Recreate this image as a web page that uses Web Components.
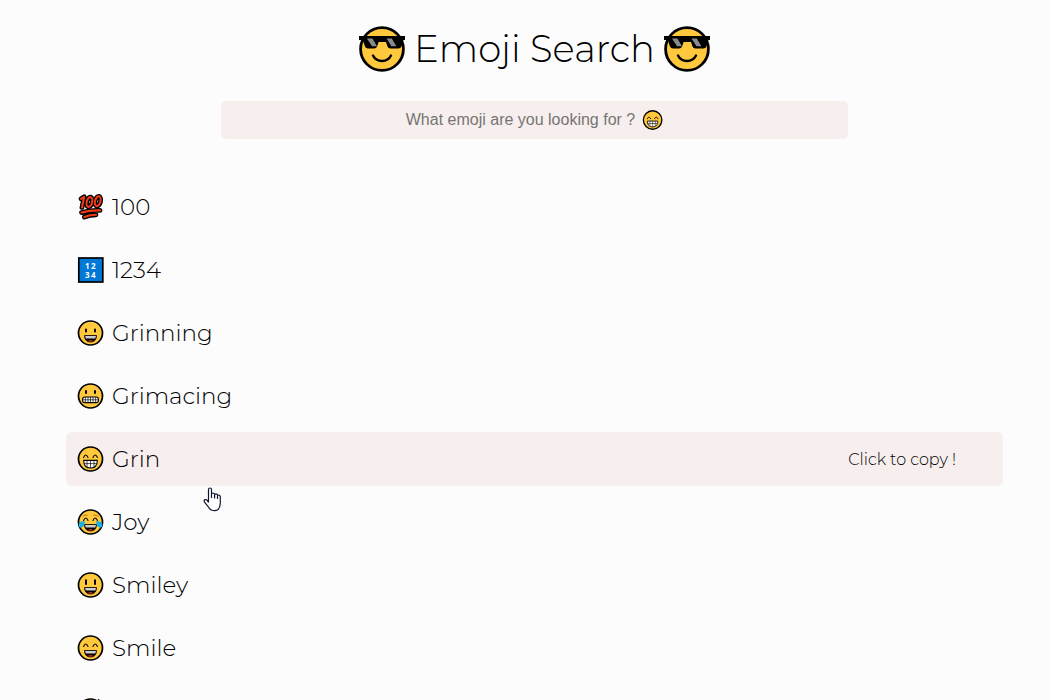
<!DOCTYPE html>
<html lang="en">
<head>
<meta charset="utf-8">
<meta name="viewport" content="width=device-width, initial-scale=1">
<title>Emoji Search</title>
<style>
  html { scrollbar-width: none; }
  body {
    margin: 0;
    background: #fcfcfc;
    color: #000;
    font-family: Montserrat, Inter, sans-serif;
    font-weight: 300;
  }
</style>
</head>
<body>
<emoji-app></emoji-app>
<script>
const face = '<circle cx="12.5" cy="13" r="12" fill="#ffc83d" stroke="#000" stroke-width="1.7"/>';
const eyes = (y, h) => `<rect x="7" y="${y}" width="2" height="${h}" rx="1"/><rect x="16" y="${y}" width="2" height="${h}" rx="1"/>`;
const arcs = '<path d="M5.6 11.4Q7.8 6.6 10 11.4M15 11.4Q17.2 6.6 19.4 11.4" fill="none" stroke="#000" stroke-width="1.1" stroke-linecap="round"/>';
const laugh = '<path d="M6.5 15.6H18.5Q18.4 22 12.5 22T6.5 15.6Z" stroke="#000" stroke-width=".8"/><path d="M7 15.9H18L17.3 18.6H7.9Z" fill="#ccc"/><path d="M10 21Q12.5 18.8 15 21Q12.5 22.2 10 21Z" fill="#e8290b"/>';
const hundredMark = '<path d="M3 4.8L6.2 2.8L4 13.4"/><ellipse cx="11.4" cy="8" rx="2.7" ry="5" transform="rotate(14 11.4 8)"/><ellipse cx="19.8" cy="7.2" rx="2.7" ry="5" transform="rotate(14 19.8 7.2)"/><path d="M3.6 18.6Q13 16 22 16.4M6.4 23Q12 20.8 18 20.8"/>';

const ART = {
  cool: [46, `<circle cx="23" cy="23" r="21.4" fill="#ffc83d" stroke="#000" stroke-width="2.8"/>
    <path d="M0 10H46V14H44.4L42.6 20Q42 22.4 39.6 22.4H31.6Q29 22.4 28.4 20.2L27 16H19.6L18.2 20.2Q17.4 22.4 15 22.4H8.8Q6.4 22.4 5.8 20L3.8 14H0Z"/>
    <path d="M8 12.6H13.4L18 20.2H13ZM27.6 12.6H32.8L37.4 20.2H32.4Z" fill="#8a8a8a"/>
    <path d="M14 29.6Q16.6 35 23 35T32 29.6" fill="none" stroke="#000" stroke-width="2.4" stroke-linecap="round"/>`],
  hundred: [26, `<g fill="none" stroke-linecap="round" stroke-linejoin="round">
      <g stroke="#000" stroke-width="4.8">${hundredMark}</g>
      <g stroke="#f03a17" stroke-width="2.1">${hundredMark}</g></g>`],
  numbers: [26, `<rect x=".8" y="1" width="24" height="24" fill="#0078d7" stroke="#000" stroke-width="1.7"/>
    <g fill="#fff" font-family="Open Sans, sans-serif" font-weight="700" font-size="8"><text x="7" y="12">1</text><text x="13" y="12">2</text><text x="7" y="21">3</text><text x="13" y="21">4</text></g>`],
  grinning: [26, face + eyes(8.6, 4) + laugh],
  grimacing: [26, face + eyes(7, 4) + `<rect x="4.6" y="14" width="15.8" height="5.6" rx="2.2" fill="#fff" stroke="#000" stroke-width="1.1"/>
    <path d="M5 16.8H20M7.4 14V19.6M10 14V19.6M12.5 14V19.6M15 14V19.6M17.6 14V19.6" stroke="#222" stroke-width=".8"/>`],
  grin: [26, face + arcs + `<path d="M5.7 14.4H19.3Q19.2 22 12.5 22T5.7 14.4Z" fill="#fff" stroke="#000" stroke-width="1.1"/>
    <path d="M6.2 17.6H18.8M9 14.4V21M12.5 14.4V22M16 14.4V21" stroke="#222" stroke-width=".8"/>`],
  joy: [26, face + `<path d="M4.6 7.6Q7 5 9.8 6.4M15.2 6.4Q18 5 20.4 7.6" fill="none" stroke="#d08a16" stroke-width="1.1"/>` + arcs + laugh +
    `<path d="M7 12.4Q1.8 11.6 .6 15.4Q.2 18.6 3.4 18.6Q6.2 18 7 12.4ZM18 12.4Q23.2 11.6 24.4 15.4Q24.8 18.6 21.6 18.6Q18.8 18 18 12.4Z" fill="#17b0e8"/>`],
  smiley: [26, face + eyes(7.2, 5.8) + laugh],
  smile: [26, face + arcs + laugh],
  sweat: [26, face + arcs + laugh + '<path d="M20.6 1Q17.6 5.4 18.4 7.4Q20.8 9.6 22.8 7.4Q23.4 5 20.6 1Z" fill="#17b0e8" stroke="#000" stroke-width=".8"/>']
};

customElements.define('emoji-glyph', class extends HTMLElement {
  connectedCallback() {
    const [box, art] = ART[this.getAttribute('name')];
    this.attachShadow({ mode: 'open' }).innerHTML = `
      <style>
        :host { display: block; flex: none; width: var(--size, 26px); height: var(--size, 26px); }
        svg { display: block; width: 100%; height: 100%; overflow: visible; }
      </style>
      <svg viewBox="0 0 ${box} ${box}" aria-hidden="true">${art}</svg>`;
  }
});

customElements.define('app-title', class extends HTMLElement {
  connectedCallback() {
    this.attachShadow({ mode: 'open' }).innerHTML = `
      <style>
        :host { display: block; }
        h1 {
          display: flex; justify-content: center; align-items: center; gap: 9px;
          margin: 0; font-size: 37px; line-height: 50px; font-weight: 300;
        }
        emoji-glyph { --size: 46px; }
      </style>
      <h1><emoji-glyph name="cool"></emoji-glyph><slot></slot><emoji-glyph name="cool"></emoji-glyph></h1>`;
  }
});

customElements.define('search-box', class extends HTMLElement {
  connectedCallback() {
    this.attachShadow({ mode: 'open' }).innerHTML = `
      <style>
        :host { display: block; position: relative; }
        input {
          display: block; box-sizing: border-box; width: 100%; height: 38px;
          margin: 0; padding: 0 28px 0 0; border: 0; border-radius: 5px; outline: 0;
          background: #f7efed; text-align: center;
          font: 400 16px "Liberation Sans", Arial, sans-serif;
        }
        input::placeholder { color: #757575; opacity: 1; }
        emoji-glyph { --size: 20px; position: absolute; top: 9px; left: calc(50% + 108px); pointer-events: none; }
        input:not(:placeholder-shown) + emoji-glyph { display: none; }
      </style>
      <input type="text" aria-label="Search emoji" placeholder="What emoji are you looking for ?">
      <emoji-glyph name="grin"></emoji-glyph>`;
  }
});

customElements.define('emoji-row', class extends HTMLElement {
  connectedCallback() {
    this.attachShadow({ mode: 'open' }).innerHTML = `
      <style>
        :host { display: block; }
        button {
          display: flex; align-items: center; gap: 8px; box-sizing: border-box;
          width: 100%; height: 54px; margin: 0; padding: 0 47px 0 12px;
          border: 0; border-radius: 6px; background: none; cursor: pointer;
          font: inherit; font-size: 23px; color: inherit; text-align: left;
        }
        .hint { display: none; margin-left: auto; font-size: 16px; }
        :host([active]) button, button:hover { background: #f7efed; }
        :host([active]) .hint, button:hover .hint { display: block; }
      </style>
      <button type="button">
        <emoji-glyph name="${this.getAttribute('icon')}"></emoji-glyph>
        <span><slot></slot></span>
        <span class="hint">Click to copy !</span>
      </button>`;
  }
});

customElements.define('hand-pointer', class extends HTMLElement {
  connectedCallback() {
    this.attachShadow({ mode: 'open' }).innerHTML = `
      <style>
        :host { display: block; width: 19px; height: 25px; pointer-events: none; }
        svg { display: block; }
      </style>
      <svg width="19" height="25" viewBox="0 0 19 25" aria-hidden="true">
        <path d="M5.5 15.5V2.5Q5.5 1 7 1T8.5 2.5V10.5V7.5Q8.7 6 10.1 6T11.6 7.5V11V8Q11.8 6.8 13 6.8T14.5 8.2V11.5V9Q14.7 8 15.8 8T17.3 9.5V16Q17.3 20.5 14.8 22.7Q12 24.2 8.5 23Q6.5 22.3 4.5 18.8L1.2 14.6Q.8 13 2 12.6Q3.5 12.3 4.5 13.7L5.5 15.5" fill="#fff" stroke="#10142e" stroke-width="1.2" stroke-linejoin="round"/>
      </svg>`;
  }
});

customElements.define('emoji-app', class extends HTMLElement {
  connectedCallback() {
    const rows = [
      ['hundred', '100'], ['numbers', '1234'], ['grinning', 'Grinning'], ['grimacing', 'Grimacing'],
      ['grin', 'Grin'], ['joy', 'Joy'], ['smiley', 'Smiley'], ['smile', 'Smile'], ['sweat', 'Sweat Smile']
    ];
    this.attachShadow({ mode: 'open' }).innerHTML = `
      <style>
        :host { display: block; padding: 24px 47px 0 66px; }
        search-box { width: 67%; margin: 27px auto 41px; }
        ul { display: grid; gap: 9px; margin: 0; padding: 0; list-style: none; }
        li { position: relative; }
        hand-pointer { position: absolute; left: 137px; top: 55px; }
      </style>
      <app-title>Emoji Search</app-title>
      <search-box></search-box>
      <ul>${rows.map(([icon, name]) => `<li><emoji-row icon="${icon}"${icon === 'grin' ? ' active' : ''}>${name}</emoji-row>${icon === 'grin' ? '<hand-pointer></hand-pointer>' : ''}</li>`).join('')}</ul>`;
  }
});
</script>
</body>
</html>
